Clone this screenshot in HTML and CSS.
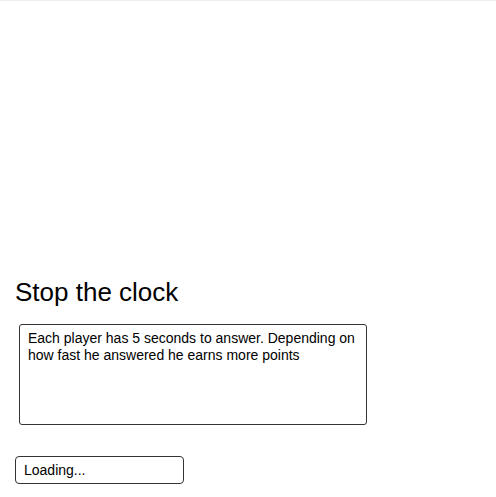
FILE: index.html
```html
<!DOCTYPE html>
<html>
<head>
<meta charset="utf-8">
<link rel="stylesheet" href="styles.css">
</head>
<body>
<div class="topline"></div>
<div class="stage"></div>
<main class="panel">
  <h1 class="title">Stop the clock</h1>
  <textarea class="desc">Each player has 5 seconds to answer. Depending on how fast he answered he earns more points</textarea>
  <input class="status" type="text" value="Loading...">
</main>
</body>
</html>
```
FILE: styles.css
```css
html, body {
  margin: 0;
  padding: 0;
  background: #fff;
  font-family: "Liberation Sans", Arial, sans-serif;
  color: #000;
}
.topline {
  height: 1px;
  background: #efefef;
}
.stage {
  height: 276px;
}
.panel {
  display: flex;
  flex-direction: column;
  align-items: flex-start;
}
.title {
  margin: 0 0 0 15px;
  font-size: 26px;
  font-weight: normal;
  line-height: 30px;
}
.desc {
  margin: 17px 0 0 19px;
  width: 348px;
  height: 101px;
  box-sizing: border-box;
  border: 1px solid #333;
  border-radius: 3px;
  padding: 5px 8px;
  font-family: "Liberation Sans", Arial, sans-serif;
  font-size: 14px;
  line-height: 17px;
  color: #000;
  resize: none;
  outline: none;
}
.status {
  margin: 31px 0 0 15px;
  width: 169px;
  height: 28px;
  box-sizing: border-box;
  border: 1px solid #333;
  border-radius: 4px;
  padding: 0 8px;
  font-family: "Liberation Sans", Arial, sans-serif;
  font-size: 14px;
  color: #000;
  outline: none;
}
```
